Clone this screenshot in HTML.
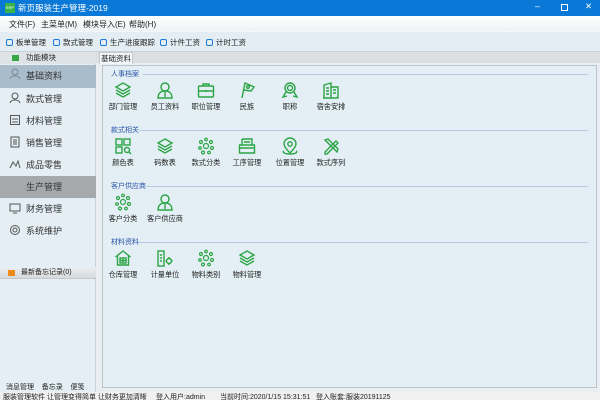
<!DOCTYPE html>
<html><head><meta charset="utf-8"><style>
*{margin:0;padding:0;box-sizing:border-box}
body{width:600px;height:400px;overflow:hidden;position:relative;background:#e8eef2;font-family:"Liberation Sans","Noto Sans CJK SC",sans-serif;font-size:8px;color:#222}
.abs{position:absolute}
#title{left:0;top:0;width:600px;height:16px;background:#0a78d6;color:#fff;font-size:8.5px}
#menu{left:0;top:16px;width:600px;height:15px;background:linear-gradient(#fff,#eef3f6);font-size:8px}
#tool{left:0;top:31px;width:600px;height:21px;background:#e3edf3;border-top:1px solid #f4f8fa;border-bottom:1px solid #c9d2d8}
#strip{left:0;top:52px;width:600px;height:11px;background:#dcdfe1}
#left{left:0;top:52px;width:96px;height:340px;background:#e4eef4;border-right:1px solid #c9d2d8}
.li{position:absolute;left:0;width:96px;height:22px;font-size:9px;line-height:22px;padding-left:26px;color:#333}
.box{left:102px;top:65px;width:495px;height:323px;background:#e4eff5;border:1px solid #b9c4cb}
.sec{position:absolute;left:8px;font-size:7px;color:#2a55a8}
.line{position:absolute;left:40px;right:8px;height:1px;background:#b6cbe6}
.ic{position:absolute;width:40px;text-align:center;font-size:7.2px;color:#222}
.ic svg{display:block;margin:0 auto 3px;width:18px;height:18px}
.tb{position:absolute;top:37px;font-size:7.5px}
.tb i{display:inline-block;width:7px;height:7px;border:1.3px solid #1a7ad8;border-radius:2px;margin-right:3px;vertical-align:-1px}
</style></head><body>
<div id="title" class="abs">
<div class="abs" style="left:5px;top:3px;width:10px;height:10px;background:#38b24a;font-size:4px;line-height:10px;color:#fff;text-align:center">ERP</div>
<div class="abs" style="left:18px;top:2px">新页服装生产管理-2019</div>
<div class="abs" style="left:535px;top:1px">–</div>
<div class="abs" style="left:561px;top:4px;width:7px;height:7px;border:1px solid #fff"></div>
<div class="abs" style="left:585px;top:1px">✕</div>
</div>
<div id="menu" class="abs">
<span class="abs" style="left:9px;top:3px">文件(F)</span>
<span class="abs" style="left:41px;top:3px">主菜单(M)</span>
<span class="abs" style="left:83px;top:3px">模块导入(E)</span>
<span class="abs" style="left:129px;top:3px">帮助(H)</span>
</div>
<div id="tool" class="abs"></div>
<div class="tb" style="left:6px"><i></i>板单管理</div>
<div class="tb" style="left:53px"><i></i>款式管理</div>
<div class="tb" style="left:100px"><i></i>生产进度跟踪</div>
<div class="tb" style="left:160px"><i></i>计件工资</div>
<div class="tb" style="left:206px"><i></i>计时工资</div>
<div id="strip" class="abs"></div>
<div id="left" class="abs">
<div class="abs" style="left:0;top:0;width:96px;height:12px;background:#dde3e7;font-size:7.5px;line-height:12px;padding-left:26px">功能模块</div>
<div class="abs" style="left:12px;top:3px;width:7px;height:6px;background:#35a845"></div>
<div class="li" style="top:13px;background:#a9bccb;height:23px;line-height:23px">基础资料</div>
<div class="li" style="top:36px">款式管理</div>
<div class="li" style="top:58px">材料管理</div>
<div class="li" style="top:80px">销售管理</div>
<div class="li" style="top:102px">成品零售</div>
<div class="li" style="top:124px;background:#a5a9ac">生产管理</div>
<div class="li" style="top:146px">财务管理</div>
<div class="li" style="top:168px">系统维护</div>
<div class="abs" style="left:0;top:215px;width:96px;height:12px;background:linear-gradient(#eceff1,#d6dadd);font-size:7px;line-height:12px;padding-left:21px;border-bottom:1px solid #c3c9cd">最新备忘记录(0)</div>
<div class="abs" style="left:8px;top:218px;width:7px;height:6px;background:#f08a1a"></div>
<div class="abs" style="left:6px;top:330px;font-size:7px">消息管理&nbsp;&nbsp;&nbsp;&nbsp;备忘录&nbsp;&nbsp;&nbsp;&nbsp;便笺</div>
</div>
<svg class="abs" style="left:9px;top:68px" width="12" height="12" fill="none" stroke="#7a8894" stroke-width="1"><circle cx="6" cy="4" r="3"/><path d="M1 11c1-4 9-4 10 0"/></svg>
<svg class="abs" style="left:9px;top:92px" width="12" height="12" fill="none" stroke="#555" stroke-width="1"><circle cx="6" cy="4" r="3"/><path d="M1 11c1-4 9-4 10 0"/></svg>
<svg class="abs" style="left:9px;top:114px" width="12" height="12" fill="none" stroke="#555" stroke-width="1"><rect x="1.5" y="1.5" width="9" height="9"/><path d="M3 5h6M3 8h6"/></svg>
<svg class="abs" style="left:9px;top:136px" width="12" height="12" fill="none" stroke="#555" stroke-width="1"><rect x="2" y="1" width="8" height="10"/><path d="M4 4h4M4 6h4M4 8h4"/></svg>
<svg class="abs" style="left:9px;top:158px" width="12" height="12" fill="none" stroke="#555" stroke-width="1"><path d="M1 10l3-6 3 4 2-5 2 7"/></svg>
<svg class="abs" style="left:9px;top:202px" width="12" height="12" fill="none" stroke="#555" stroke-width="1"><rect x="1" y="2" width="10" height="7"/><path d="M4 11h4"/></svg>
<svg class="abs" style="left:9px;top:224px" width="12" height="12" fill="none" stroke="#555" stroke-width="1"><circle cx="6" cy="6" r="4.5"/><circle cx="6" cy="6" r="2"/></svg>
<div class="abs" style="left:99px;top:52px;width:34px;height:12px;background:#f4f7f9;border:1px solid #c3cbd1;border-bottom:none;font-size:7.5px;line-height:11px;text-align:center">基础资料</div>
<div class="abs box">
<div class="sec" style="top:3px">人事档案</div><div class="line" style="top:8px"></div>
<div class="sec" style="top:59px">款式相关</div><div class="line" style="top:64px;left:36px"></div>
<div class="sec" style="top:115px">客户供应商</div><div class="line" style="top:120px;left:44px"></div>
<div class="sec" style="top:171px">材料资料</div><div class="line" style="top:176px;left:36px"></div>
</div>
<svg width="0" height="0" style="position:absolute">
<defs>
<g id="layers" fill="none" stroke="#2ba545" stroke-width="1.4"><path d="M9 2l7 4-7 4-7-4z"/><path d="M2 9l7 4 7-4"/><path d="M2 12l7 4 7-4"/></g>
<g id="person" fill="none" stroke="#2ba545" stroke-width="1.4"><circle cx="9" cy="6" r="4"/><path d="M2 17c0-5 3-7 7-7s7 2 7 7z"/><path d="M9 11v5"/></g>
<g id="case" fill="none" stroke="#2ba545" stroke-width="1.4"><rect x="1.5" y="5" width="15" height="11" rx="1"/><path d="M6 5V3h6v2M1.5 10h15M9 9v2"/></g>
<g id="flag" fill="none" stroke="#2ba545" stroke-width="1.4"><path d="M4 17L7 2l9 4-3 4-7-1"/><circle cx="10" cy="6" r="1.3"/></g>
<g id="medal" fill="none" stroke="#2ba545" stroke-width="1.4"><circle cx="9" cy="7" r="5"/><circle cx="9" cy="7" r="2.5"/><path d="M5 11l-3 5 4-1M13 11l3 5-4-1"/></g>
<g id="bldg" fill="none" stroke="#2ba545" stroke-width="1.4"><path d="M2 17V4l7-2v15M9 6h7v11H1"/><path d="M4 7h3M4 10h3M4 13h3M11 9h3M11 12h3"/></g>
<g id="grid" fill="none" stroke="#2ba545" stroke-width="1.4"><rect x="2" y="2" width="6" height="6"/><rect x="10" y="2" width="6" height="6"/><rect x="2" y="10" width="6" height="6"/><circle cx="13" cy="13" r="2.5"/><path d="M15 15l2 2"/></g>
<g id="dots" fill="none" stroke="#2ba545" stroke-width="1.2"><circle cx="9" cy="9" r="2.5"/><circle cx="4" cy="5" r="1.5"/><circle cx="9" cy="2.5" r="1.3"/><circle cx="14" cy="5" r="1.5"/><circle cx="3" cy="11" r="1.3"/><circle cx="15" cy="11" r="1.5"/><circle cx="6" cy="15.5" r="1.5"/><circle cx="12" cy="15.5" r="1.3"/></g>
<g id="tray" fill="none" stroke="#2ba545" stroke-width="1.4"><path d="M4 2h10v6M4 2v6M6 5h6"/><path d="M1.5 8h15v8h-15zM1.5 11h15"/></g>
<g id="pin" fill="none" stroke="#2ba545" stroke-width="1.4"><path d="M9 16c-4-4-6-7-6-9a6 6 0 0 1 12 0c0 2-2 5-6 9z"/><circle cx="9" cy="7" r="2.2"/><path d="M3 14c-2 1 0 3 6 3s8-2 6-3"/></g>
<g id="pencil" fill="none" stroke="#2ba545" stroke-width="1.4"><path d="M3 15L14 4l2 2L5 17H3zM3 3l3-1 10 10-1 3z"/></g>
<g id="house" fill="none" stroke="#2ba545" stroke-width="1.4"><path d="M1.5 8L9 2l7.5 6M3.5 7v9h11V7"/><rect x="6" y="9" width="6" height="5"/><path d="M9 9v5M6 11.5h6"/></g>
<g id="meter" fill="none" stroke="#2ba545" stroke-width="1.4"><rect x="2" y="2" width="6" height="15"/><path d="M4 6h2M4 9h2M4 12h2"/><circle cx="13" cy="12" r="2.5"/><path d="M13 8v1.5M13 14.5V16M9.5 12H11M15 12h1.5"/></g>
</defs></svg>
<div class="ic" style="left:103px;top:81px"><svg viewBox="0 0 18 18"><use href="#layers"/></svg>部门管理</div>
<div class="ic" style="left:145px;top:81px"><svg viewBox="0 0 18 18"><use href="#person"/></svg>员工资料</div>
<div class="ic" style="left:186px;top:81px"><svg viewBox="0 0 18 18"><use href="#case"/></svg>职位管理</div>
<div class="ic" style="left:227px;top:81px"><svg viewBox="0 0 18 18"><use href="#flag"/></svg>民族</div>
<div class="ic" style="left:270px;top:81px"><svg viewBox="0 0 18 18"><use href="#medal"/></svg>职称</div>
<div class="ic" style="left:311px;top:81px"><svg viewBox="0 0 18 18"><use href="#bldg"/></svg>宿舍安排</div>
<div class="ic" style="left:103px;top:137px"><svg viewBox="0 0 18 18"><use href="#grid"/></svg>颜色表</div>
<div class="ic" style="left:145px;top:137px"><svg viewBox="0 0 18 18"><use href="#layers"/></svg>码数表</div>
<div class="ic" style="left:186px;top:137px"><svg viewBox="0 0 18 18"><use href="#dots"/></svg>款式分类</div>
<div class="ic" style="left:227px;top:137px"><svg viewBox="0 0 18 18"><use href="#tray"/></svg>工序管理</div>
<div class="ic" style="left:270px;top:137px"><svg viewBox="0 0 18 18"><use href="#pin"/></svg>位置管理</div>
<div class="ic" style="left:311px;top:137px"><svg viewBox="0 0 18 18"><use href="#pencil"/></svg>款式序列</div>
<div class="ic" style="left:103px;top:193px"><svg viewBox="0 0 18 18"><use href="#dots"/></svg>客户分类</div>
<div class="ic" style="left:145px;top:193px"><svg viewBox="0 0 18 18"><use href="#person"/></svg>客户供应商</div>
<div class="ic" style="left:103px;top:249px"><svg viewBox="0 0 18 18"><use href="#house"/></svg>仓库管理</div>
<div class="ic" style="left:145px;top:249px"><svg viewBox="0 0 18 18"><use href="#meter"/></svg>计量单位</div>
<div class="ic" style="left:186px;top:249px"><svg viewBox="0 0 18 18"><use href="#dots"/></svg>物料类别</div>
<div class="ic" style="left:227px;top:249px"><svg viewBox="0 0 18 18"><use href="#layers"/></svg>物料管理</div>
<div class="abs" style="left:0;top:392px;width:600px;height:8px;background:#f0f0f0;font-size:7px;line-height:8px;white-space:nowrap;overflow:hidden;padding-top:3px">
<span class="abs" style="left:3px;top:2px">服装管理软件 让管理变得简单 让财务更加清晰</span>
<span class="abs" style="left:156px;top:2px">登入用户:admin</span>
<span class="abs" style="left:220px;top:2px">当前时间:2020/1/15 15:31:51</span>
<span class="abs" style="left:316px;top:2px">登入账套:服装20191125</span>
</div>
</body></html>
